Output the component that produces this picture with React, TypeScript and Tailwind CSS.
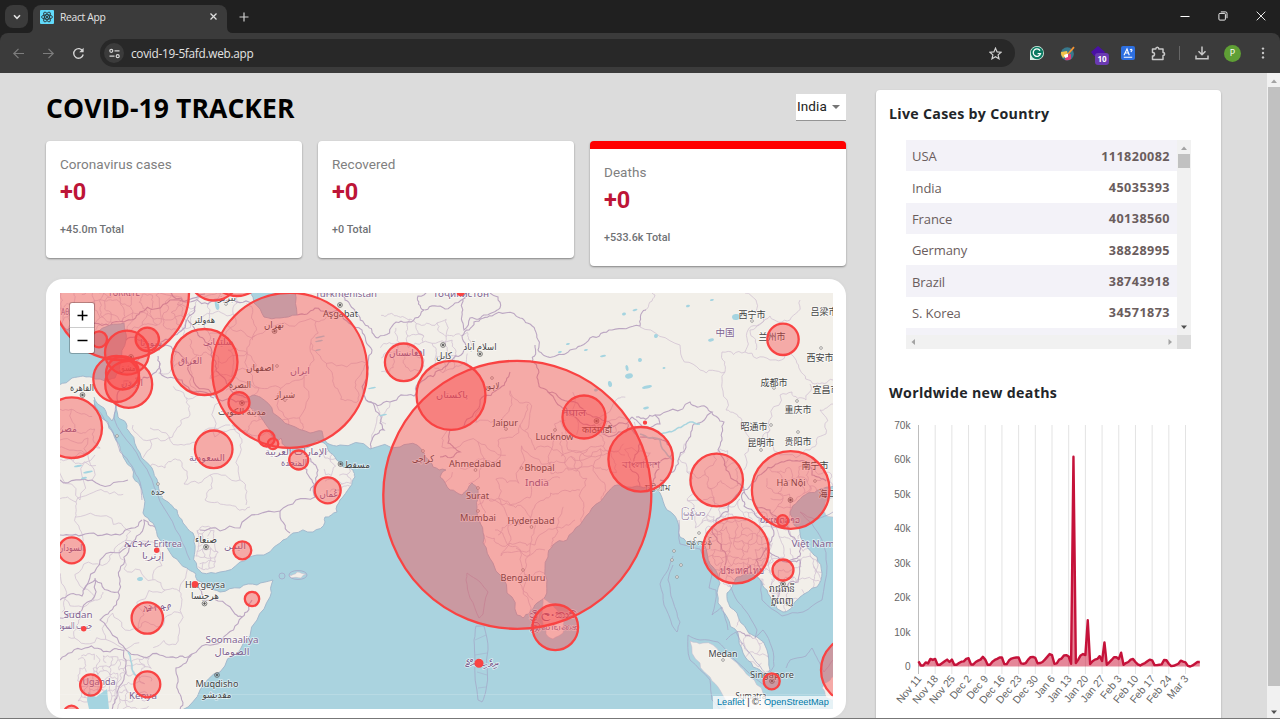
import React from "react";

type Pt = [number, number];

/* ---------- map geometry ---------- */

function parse(s: string): Pt[] {
  return s.trim().split(/\s+/).map((p) => p.split(",").map(Number) as Pt);
}

function makeRandom(seed: number) {
  let s = seed;
  return () => {
    s = (s * 16807) % 2147483647;
    return s / 2147483647;
  };
}

/* Midpoint displacement, so that borders and coasts look irregular. */
function rough(points: Pt[], amount: number, seed: number, levels = 3): string {
  const rnd = makeRandom(seed * 7919 + 13);
  let pts = points;
  for (let l = 0; l < levels; l++) {
    const next: Pt[] = [pts[0]];
    for (let i = 1; i < pts.length; i++) {
      const [ax, ay] = pts[i - 1];
      const [bx, by] = pts[i];
      const dx = bx - ax;
      const dy = by - ay;
      const len = Math.hypot(dx, dy);
      if (len > 3.5 && !(ax > 832 && bx > 832) && !(ay > 708 && by > 708)) {
        const k = (rnd() - 0.5) * amount;
        next.push([(ax + bx) / 2 - dy * k, (ay + by) / 2 + dx * k]);
      }
      next.push([bx, by]);
    }
    pts = next;
  }
  return pts.map((p, i) => (i ? "L" : "M") + p[0].toFixed(1) + " " + p[1].toFixed(1)).join("");
}

function mesh(x0: number, y0: number, x1: number, y1: number, cell: number, seed: number, keep = 0.7): string {
  const rnd = makeRandom(seed * 104729 + 7);
  const cols = Math.round((x1 - x0) / cell);
  const rows = Math.round((y1 - y0) / cell);
  const g: Pt[][] = [];
  for (let r = 0; r <= rows; r++) {
    g.push([]);
    for (let c = 0; c <= cols; c++) g[r].push([x0 + c * cell + (rnd() - 0.5) * cell * 0.8, y0 + r * cell + (rnd() - 0.5) * cell * 0.8]);
  }
  let d = "";
  for (let r = 0; r <= rows; r++)
    for (let c = 0; c <= cols; c++) {
      if (c < cols && rnd() < keep) d += rough([g[r][c], g[r][c + 1]], 0.5, seed + r * 31 + c);
      if (r < rows && rnd() < keep) d += rough([g[r][c], g[r + 1][c]], 0.5, seed + r * 17 + c * 3);
    }
  return d;
}

const OCEAN =
  "94,397 104,408 112,421 116,405 118,417 126,423 130,433 140,453 152,468 158,483 168,502 177,510 183,523 193,533 195,550 197,568 202,573 220,572 240,562 257,555 280,543 293,533 313,532 325,522 325,517 337,512 340,500 350,487 355,477 353,470 343,467 335,457 327,446 318,440 309,447 296,452 286,448 281,438 277,441 272,436 270,430 257,413 247,398 253,395 260,397 273,413 290,425 310,433 322,431 327,443 340,445 370,449 400,447 417,445 425,457 433,467 446,470 440,477 450,490 462,495 472,483 478,490 477,507 480,523 483,543 493,563 507,593 517,615 523,618 530,613 537,603 545,597 547,580 548,557 553,545 567,540 580,525 592,508 607,493 617,485 637,486 650,487 660,493 667,510 677,520 680,537 687,542 700,541 707,553 713,567 720,583 718,603 727,617 738,633 743,653 753,667 765,675 770,670 767,650 757,637 747,630 737,613 730,607 727,593 733,583 737,577 750,573 760,580 767,590 773,603 783,612 793,605 800,597 817,587 822,573 817,557 807,547 800,533 793,523 790,512 798,501 808,493 820,489 834,486 834,710 182,710 200,690 220,672 240,650 257,620 270,597 273,580 257,585 240,588 220,592 207,588 197,580 195,573 187,568 173,557 160,540 153,523 143,513 142,490 133,477 125,460 120,447 113,433 108,422 94,400";

const MEDITERRANEAN = "59,322 75,333 95,333 110,325 124,323 126,340 121,362 115,378 105,381 95,379 83,376 72,378 59,385 59,322";
const CASPIAN = "250,292 254,303 264,317 280,318 297,315 295,292 250,292";

const ISLANDS = [
  "690,641 703,643 720,653 737,663 750,677 763,693 772,712 727,712 720,690 710,677 700,663 690,641",
  "543,598 552,603 558,612 564,622 563,633 553,639 546,634 543,617 543,598",
  "834,497 826,501 823,509 827,516 834,517 834,497",
  "834,676 829,681 822,688 826,697 834,700 834,676",
  "289,575 297,572 306,574 301,578 291,578 289,575",
];

const NATIONS = [
  "60,348 60,335 80,330 110,326 124,322 140,312 170,300 205,294",
  "126,340 135,337 148,342 159,350 172,336 186,322 195,306",
  "122,362 135,363 150,353 166,345 190,374 215,396 236,402 250,400",
  "118,405 118,392 124,381 135,387 156,372 160,363",
  "158,356 160,373 182,380 190,390 214,398",
  "188,320 200,337 212,352 216,371 230,387 247,398",
  "60,480 92,480 128,480",
  "60,535 85,534 120,535 142,520",
  "200,530 240,528 280,511 315,497 312,480 298,462",
  "280,511 290,533",
  "310,491 318,470 310,458",
  "170,292 185,302 208,304 228,300 252,303",
  "297,315 315,308 340,312 362,330 372,350 368,374 366,400 380,415 384,430 372,440 371,449",
  "318,293 335,290 345,300 355,312 368,326 378,338 396,322 415,318 424,310 418,296 430,292",
  "366,400 390,402 414,396 424,380 440,370 452,360 466,346 462,336 474,322 492,316",
  "425,310 445,309 455,303 466,296 462,312 464,330 470,318 486,315 500,308 498,297 490,293",
  "492,316 520,318 535,330 538,350 552,357 570,350 590,338 612,330 640,326 646,310",
  "535,345 532,362 538,380 548,392 552,392 580,407 602,420 626,424 632,417",
  "548,392 556,402 575,417 600,430 626,432 628,424",
  "510,372 500,388 480,400 470,418 450,430 448,443 460,452 440,457",
  "632,417 640,424 660,424 655,415 636,417",
  "632,430 640,440 638,452 630,466 640,486",
  "640,437 660,439 672,452 660,462 655,474 652,487",
  "655,415 690,402 706,407 712,412 694,424 688,440 679,458 668,478 660,480",
  "712,412 724,422 722,440 718,450 726,470 734,480 744,490",
  "744,490 754,482 764,472 774,466 790,460 806,462 812,475 826,481",
  "744,490 734,498 728,512 716,520 712,532 722,550 724,570 718,580",
  "744,490 752,500 758,508 770,510 780,522 796,540 800,556 786,562",
  "744,492 744,506 756,516 770,522 774,534 768,548",
  "758,574 756,560 766,548 786,562 800,560 798,582 782,590 776,602",
  "720,625 734,631 750,636",
  "60,600 82,596 95,580 118,592 120,570 130,545 144,520 158,530 178,548 195,572",
  "118,592 108,614 100,620 126,650 150,656 176,658 192,654",
  "192,654 176,668 178,690 180,710",
  "195,585 205,600 235,614 242,617 252,600",
  "192,654 222,640 242,617",
  "60,660 85,648 110,652 124,650 126,660 118,690 112,710",
  "60,618 82,610 95,578",
  "130,545 100,560 84,590",
];

const STATES = [
  "60,440 88,438 92,480",
  "60,462 80,500 95,455",
  "104,293 100,310 112,322",
  "133,425 150,440 140,470 165,468 180,460",
  "150,440 176,430 190,415 186,398",
  "180,460 184,484 210,475 240,480 240,445 232,425",
  "210,475 205,500 230,505 250,507",
  "240,480 246,505",
  "150,428 178,445 200,438 230,425",
  "232,425 256,440 270,450",
  "376,404 372,440",
  "390,402 380,420 386,424",
  "645,310 655,295 652,293",
  "640,327 680,345 700,370 725,372 722,352 745,352",
  "745,352 748,330 764,320 756,300 745,293",
  "725,372 726,410 742,420 752,440 744,470",
  "745,352 770,360 790,352 800,370 815,384 833,380",
  "756,350 750,330 770,316 790,320 800,300",
  "752,440 770,430 780,395 792,392 806,400 810,384",
  "770,430 780,455 810,450 826,434 820,410 833,404",
  "460,468 478,459 496,462 498,440 520,425 528,404",
  "478,505 495,500 510,505 530,498 540,480 560,478",
  "498,535 510,525 530,520 544,500 560,492 580,490",
  "486,536 500,545 520,542 535,545 556,528 575,520",
  "495,530 508,545 524,555 545,550",
  "516,548 520,580 533,600",
  "560,420 568,450 590,456 610,450 625,455",
  "520,425 535,450 560,452 568,470 600,468",
];

const LAKES: [number, number, number, number][] = [
  [140, 579, 3, 2], [217, 305, 2, 5], [736, 317, 4, 3], [711, 340, 3, 1.5],
  [629, 376, 4, 2.5], [647, 387, 5, 1.5], [610, 384, 2, 3], [640, 360, 2, 2], [656, 336, 2, 2],
  [635, 310, 2.5, 1], [624, 314, 2, 1.5], [712, 300, 2, 1], [688, 306, 2, 1.2], [596, 390, 2, 1.5],
  [646, 408, 3, 1.2], [586, 350, 2, 1], [560, 352, 2, 1], [568, 344, 2, 1], [320, 337, 5, 0.8],
  [319, 341, 4, 0.8], [318, 350, 3, 0.8], [78, 466, 4, 1], [88, 472, 5, 1], [84, 478, 3, 1], [383, 415, 4, 0.8],
  [372, 388, 4, 0.8], [627, 368, 1.5, 3], [603, 356, 3, 1], [664, 368, 1.5, 1],
];

const SEA_BORDERS = [
  "94,404 108,424 116,438 120,452 132,466 140,482 142,500",
  "116,405 114,418 122,434 140,460 152,480 164,508 180,536 190,560",
  "467,573 480,582 488,592 483,614 479,618 470,598 466,580 467,573",
  "476,626 484,626 488,650 486,690 482,702 478,700 475,660 474,640 476,626",
  "673,556 668,570 660,584 664,605 672,625 677,632 680,622 676,610 671,596 668,580 673,565",
  "679,520 680,544 700,549 712,570 709,588 716,590 712,615 722,607 728,630",
  "730,585 738,602 745,610 757,630 755,638 763,630 772,648 774,666 770,672",
  "761,580 762,600 782,616 803,612 822,600 827,566 822,540 812,524 800,512 816,520 833,512",
  "688,635 690,660 710,680 712,700 722,712",
  "688,635 700,640 718,642 730,655 748,672 770,690",
  "726,640 736,632 756,662 770,676",
  "786,668 790,660 806,656 812,648 818,660 824,672 833,660",
];

const CIRCLES: [number, number, number][] = [
  [121, 292, 68], [214, 275.5, 25], [237, 268, 28], [289.8, 370.3, 77.5], [204.5, 362, 33], [127, 352.7, 22],
  [99, 339.3, 8], [147.3, 339.3, 11.7], [116.3, 379, 23], [128.7, 384.3, 23.5], [122.5, 373, 16.5], [71.7, 427.7, 30.3],
  [239, 402.7, 10.5], [266.7, 438.5, 8], [273, 443.7, 5.3], [298.7, 460, 9.5], [213.7, 449.3, 18.8], [403.7, 362.3, 18.8],
  [451, 395.3, 34.5], [327.7, 490.3, 13], [517.3, 494.8, 134], [584, 417, 21.5], [640.7, 459.3, 32.3], [716.7, 480, 26.3],
  [790.7, 490, 38.8], [783, 339.3, 15.7], [645, 422.7, 1], [735.7, 550.3, 33], [782.7, 520.7, 5.5], [783, 570, 10.5],
  [771.7, 681.3, 8], [855, 670, 34], [555.3, 627.3, 22.8], [479, 663.3, 3.4], [460.7, 292, 3], [71.7, 550.3, 13],
  [156.7, 550.3, 1.6], [195, 584.3, 2.2], [242.3, 550.3, 9], [252, 599, 7.2], [147.3, 618, 15.7], [83.7, 628.7, 1.6],
  [90.7, 685, 10.6], [147.3, 684.3, 13], [71.5, 713, 7.4],
];

/* text, centre x, baseline y, drawn width, kind (c = city, n = nation) */
const LABELS: [string, number, number, number, "c" | "n"][] = [
  ["TÜRKİYE", 124, 296, 32, "n"], ["Αθ", 65, 315, 8, "n"], ["تبریز", 227, 301, 18, "c"], ["هەولێر", 204, 323, 22, "c"],
  ["سلێمانی", 218, 345, 30, "n"], ["سوريا", 151, 346, 22, "n"], ["دمشق", 129, 371, 20, "c"], ["الأردن", 132, 386, 22, "n"],
  ["العراق", 190, 364, 24, "n"], ["القاهرة", 82, 391, 24, "c"], ["مصر", 68, 432, 18, "n"], ["تهران", 274, 328, 20, "c"],
  ["اصفهان", 260, 371, 28, "c"], ["ایران", 300, 374, 20, "n"], ["البصرة", 240, 388, 22, "c"], ["شیراز", 285, 398, 20, "c"],
  ["مدينة الكويت", 242, 415, 48, "c"], ["السعودية", 207, 461, 36, "n"], ["الإمارات العربية", 296, 455, 62, "n"],
  ["المتحدة", 294, 466, 26, "n"], ["جدة", 158, 495, 14, "c"], ["Türkmenistan", 346, 297, 62, "n"], ["Aşgabat", 340.5, 317, 35, "c"],
  ["Тоҷикистон", 461, 297, 56, "n"], ["افغانستان", 407, 356, 36, "n"], ["کابل", 444, 359, 16, "c"], ["اسلام آباد", 480, 350, 33, "c"],
  ["پاکستان", 452, 398, 32, "n"], ["لاہور", 492, 389, 15, "c"], ["Jaipur", 505.5, 426, 25, "c"], ["Lucknow", 554.5, 440, 38, "c"],
  ["नेपाल", 574, 416, 24, "n"], ["काठमाडौं", 597, 433, 30, "c"], ["كراچی", 423, 462, 22, "c"], ["Ahmedabad", 475, 467, 52, "c"],
  ["Bhopal", 539.5, 471, 30, "c"], ["India", 537, 486.3, 24, "n"], ["Surat", 477.5, 499, 23, "c"], ["Mumbai", 478, 520.7, 36, "c"],
  ["Hyderabad", 531, 524, 47, "c"], ["Bengaluru", 523, 580.5, 45, "c"], ["বাংলাদেশ", 641, 468, 39, "n"], ["চট্টগ্রাম", 658, 491, 26, "c"],
  ["مسقط", 357, 468, 26, "c"], ["عُمان", 329, 497, 19, "n"], ["西宁市", 752, 317.500, 27, "c"], ["中国", 725, 335.5, 19, "n"],
  ["兰州市", 772, 340, 27, "c"], ["吕梁市", 824, 315, 27, "c"], ["西安市", 820, 361, 27, "c"], ["成都市", 774, 386, 27, "c"],
  ["宜昌市", 826, 393, 27, "c"], ["重庆市", 798, 413, 27, "c"], ["昭通市", 754, 429.5, 27, "c"], ["昆明市", 761, 446, 27, "c"],
  ["贵阳市", 798, 445, 27, "c"], ["南宁市", 815, 469, 27, "c"], ["Hà Nội", 791, 485.500, 29, "c"], ["海口市", 832, 497, 27, "c"],
  ["မြန်မာ", 693, 516, 25, "n"], ["ရန်ကုန်", 699, 545, 26, "c"], ["ປະເທດລາວ", 780, 523, 40, "n"], ["Việt Nam", 813, 547, 43, "n"],
  ["ประเทศไทย", 742, 574, 44, "n"], ["រាជធានី", 782, 592, 26, "c"], ["ភ្នំពេញ", 782, 604, 23, "c"], ["Medan", 723, 657, 29, "c"],
  ["Singapore", 772, 677.5, 44, "c"], ["Sumatra", 751, 699, 31, "c"], ["ශ්‍රී ලංකාව", 553, 618, 48, "n"], ["இலங்கை", 554, 630, 48, "n"],
  ["ދިވެހިރާއްޖެ", 482, 667, 34, "n"], ["السودان", 71, 551, 27, "n"], ["ኤርትራ Eritrea", 153, 547, 58, "n"], ["إرتريا", 153, 559, 22, "n"],
  ["صنعاء", 206, 543, 22, "c"], ["اليمن", 235, 549, 22, "n"], ["Hargeysa", 205, 587.500, 40, "c"], ["هرجيسا", 205, 599, 28, "c"],
  ["ኢትዮጵያ", 157, 611, 29, "n"], ["Sudan", 78, 618, 29, "n"], ["جنوب السودان", 72, 629, 40, "n"], ["Soomaaliya", 232, 643, 53, "n"],
  ["الصومال", 232, 655, 35, "n"], ["Muqdisho", 217, 687, 43, "c"], ["مقديشو", 217, 698, 29, "c"], ["Uganda", 99, 685, 33, "n"], ["Kenya", 143, 699, 28, "n"],
];

const CAPITALS: Pt[] = [[274.5, 331], [82.5, 395], [340, 305], [443, 345], [480, 354], [596.5, 421], [340.5, 464], [206, 547], [204.5, 603.5], [217, 675], [783, 584], [790.5, 500], [242, 403], [772, 681], [131, 357]];
const TOWNS: Pt[] = [[277, 366], [285, 400], [226, 304], [158, 484], [492, 378], [506, 429], [555, 430], [423, 451], [475.5, 470], [521.5, 468], [478, 488], [478, 511], [531.5, 527], [523, 570], [752, 321], [821, 348], [774, 388], [797, 401], [771, 425], [798, 432], [761, 450], [815, 481], [723, 660], [658, 487], [699, 533], [674, 551], [672, 560], [681, 565], [677, 577], [117, 436]];

const MapView = React.memo(function MapView() {
  return (
    <svg className="block h-[416px] w-[773px]" viewBox="60 293 773 416" fill="none">
      <rect x="60" y="293" width="773" height="416" fill="#f2efe9" />
      <g stroke="#c9b5cd" strokeWidth="0.7" opacity="0.85">
        <path d={mesh(60, 293, 190, 325, 12, 3, 0.8)} />
        <path d={mesh(385, 320, 470, 372, 12, 5, 0.7)} />
        <path d={mesh(225, 325, 360, 440, 28, 8, 0.7)} />
        <path d={mesh(450, 400, 630, 600, 26, 12, 0.5)} />
        <path d={mesh(708, 515, 768, 585, 7, 14, 0.75)} />
        <path d={mesh(770, 470, 825, 610, 10, 15, 0.7)} />
        <path d={mesh(690, 450, 750, 515, 18, 16, 0.7)} />
        <path d={mesh(198, 526, 218, 566, 6, 17, 0.8)} />
        <path d={mesh(80, 655, 118, 705, 6, 18, 0.8)} />
        <path d={mesh(118, 660, 150, 708, 8, 19, 0.7)} />
        <path d={mesh(60, 500, 180, 650, 24, 20, 0.55)} />
        <path d={mesh(160, 300, 245, 395, 18, 21, 0.5)} />
        <path d={mesh(325, 450, 350, 490, 8, 22, 0.6)} />
        <path d={mesh(550, 420, 640, 460, 16, 23, 0.6)} />
        <path d={mesh(738, 610, 770, 672, 9, 24, 0.6)} />
        <path d={mesh(60, 410, 100, 455, 18, 25, 0.6)} />
        {STATES.map((s, i) => (
          <path key={i} d={rough(parse(s), 0.45, i + 60)} />
        ))}
      </g>
      <g stroke="#bba6c2" strokeWidth="1.1">
        {NATIONS.map((s, i) => (
          <path key={i} d={rough(parse(s), 0.4, i + 2)} />
        ))}
      </g>
      <path d={rough(parse("660,434 675,430 690,422 700,424"), 0.3, 9) + rough(parse("672,460 660,440 640,434"), 0.3, 4) + rough(parse("128,652 132,668 136,676"), 0.2, 5)} stroke="#a9d5df" strokeWidth="1.5" />
      <g fill="#a5d4e0">
        <path d="M88 692L96 697L107 689L109 709H89L87 700Z" />
        {LAKES.map(([x, y, a, b], i) => (
          <ellipse key={i} cx={x} cy={y} rx={a} ry={b} transform={"rotate(-12 " + x + " " + y + ")"} />
        ))}
      </g>
      <g fill="#aad3df" stroke="#9fb4cb" strokeWidth="0.9" strokeLinejoin="round">
        <path d={rough(parse(OCEAN), 0.3, 31, 2)} />
        <path d={rough(parse(MEDITERRANEAN), 0.2, 32, 2)} />
        <path d={rough(parse(CASPIAN), 0.2, 33, 2)} />
      </g>
      <g fill="#f2efe9" stroke="#c3b6cc" strokeWidth="0.5">
        {ISLANDS.map((s, i) => (
          <path key={i} d={rough(parse(s), 0.35, i + 90, 2)} />
        ))}
      </g>
      <g stroke="#a39fc4" strokeWidth="0.8" opacity="0.8">
        {SEA_BORDERS.map((s, i) => (
          <path key={i} d={rough(parse(s), 0.12, i + 200, 2)} />
        ))}
        <path d="M475 640l11 -5M475 655l12 -2M477 672l10 3M478 688l8 -1" opacity="0.6" />
        <ellipse cx="282" cy="576" rx="3" ry="3" />
        <ellipse cx="298" cy="575" rx="9" ry="4.5" />
      </g>
      <path d="M60 694.500H833" stroke="#fff" strokeWidth="0.5" opacity="0.35" />
      <g stroke="#555" strokeWidth="0.7">
        {CAPITALS.map(([x, y], i) => (
          <g key={i}>
            <circle cx={x} cy={y} r="2.4" />
            <circle cx={x} cy={y} r="0.9" fill="#555" />
          </g>
        ))}
        {TOWNS.map(([x, y], i) => (
          <circle key={i} cx={x} cy={y} r="1.4" strokeWidth="0.6" stroke="#777" fill="#f4f1ee" />
        ))}
      </g>
      <g className="font-['Noto_Sans','DejaVu_Sans','Noto_Sans_CJK_SC',sans-serif] text-[9.5px]" textAnchor="middle">
        {LABELS.map(([t, x, y, w, k], i) => (
          <text
            key={i}
            x={x}
            y={y}
            textLength={w}
            lengthAdjust="spacingAndGlyphs"
            fill={k === "c" ? "#444444" : "#80628f"}
            stroke="#ffffff"
            strokeOpacity="0.6"
            strokeWidth="1.5"
            paintOrder="stroke"
          >
            {t}
          </text>
        ))}
      </g>
      <g stroke="#f94343" strokeWidth="2.3" fill="#fb4443" fillOpacity="0.4">
        {CIRCLES.map(([x, y, r], i) => (
          <circle key={i} cx={x} cy={y} r={r} fillOpacity={r < 4 ? 1 : 0.4} />
        ))}
      </g>
    </svg>
  );
});

/* ---------- chart ---------- */

const DEATHS = [
  1.5, 0.3, 0.3, 1.2, 0.9, 2.2, 1.9, 2.2, 0.5, 0.5, 1, 1.5, 2, 1.3, 2, 0.5, 0.5, 1, 1.4, 1.5, 2.2, 2.4, 0.6, 0.6, 1.3, 1.7, 2, 2.8,
  2, 0.5, 0.5, 1.4, 1.9, 2.2, 2.6, 2.6, 0.7, 0.7, 1.8, 2.3, 2.5, 2.6, 2.6, 0.9, 0.8, 1, 2, 2.7, 2.8, 2.5, 0.9, 1, 1.3, 2, 2.8, 3.6,
  3.3, 0.8, 0.9, 2, 2.3, 3.2, 3.3, 2.9, 0.8, 60.8, 1, 2, 3.2, 3.6, 3.3, 13.4, 0.7, 1.5, 2, 2.2, 3, 1.6, 7, 0.5, 1.2, 1.9, 2.7, 2.7,
  2.2, 4, 0.5, 1, 1.3, 2, 2.2, 1.3, 0.6, 0.3, 0.7, 1, 1.5, 2, 1.8, 0.4, 0.4, 0.5, 0.6, 1.9, 1.8, 0.8, 0.1, 0.2, 0.5, 0.8, 1.7, 1.4,
  1.2, 0.2, 0, 0.3, 0.8, 1.3, 1.3,
];
const TICKS = ["Nov 11", "Nov 18", "Nov 25", "Dec 2", "Dec 9", "Dec 16", "Dec 23", "Dec 30", "Jan 6", "Jan 13", "Jan 20", "Jan 27", "Feb 3", "Feb 10", "Feb 17", "Feb 24", "Mar 3"];

function DeathsChart() {
  const px = (i: number) => 28.5 + i * 2.384;
  const py = (v: number) => 251.5 - v * 3.45;
  const line = DEATHS.map((v, i) => (i ? "L" : "M") + px(i).toFixed(2) + " " + py(v).toFixed(2)).join("");
  return (
    <svg className="block h-[300px] w-[320px] font-['Liberation_Sans',sans-serif]" viewBox="0 0 320 300">
      {TICKS.map((t, i) => (
        <g key={t}>
          <line x1={px(i * 7)} x2={px(i * 7)} y1="10" y2="259" stroke={i ? "#e3e3e3" : "#bdbdbd"} strokeWidth="1" />
          <text transform={"translate(" + (px(i * 7) + 0.5) + " 261.5) rotate(-50)"} textAnchor="end" dy="4" fontSize="10.5" fill="#666">
            {t}
          </text>
        </g>
      ))}
      {[0, 10, 20, 30, 40, 50, 60, 70].map((v) => (
        <text key={v} x="20.500" y={py(v) + 3.5} textAnchor="end" fontSize="10.1" fill="#666">
          {v ? v + "k" : "0"}
        </text>
      ))}
      <path d={line + "L" + px(DEATHS.length - 1) + " 251.5L28.5 251.5Z"} fill="rgb(204,16,52)" fillOpacity="0.5" />
      <path d={line} fill="none" stroke="#c5123a" strokeWidth="2.4" strokeLinejoin="round" />
    </svg>
  );
}

/* ---------- dashboard ---------- */

function InfoBox({ title, total, active }: { title: string; total: string; active?: boolean }) {
  return (
    <div className={"w-64 overflow-hidden rounded bg-white shadow-[0_1px_2px_rgba(0,0,0,0.4)] " + (active ? "border-t-8 border-[red]" : "")}>
      <div className="h-[117px] px-[14px] pt-[13px] font-['Roboto',sans-serif]">
        <div className="text-[13.5px] leading-5 tracking-[0.05px] text-[#808080]">{title}</div>
        <div className="mt-[4px] text-[23.5px] leading-7 font-bold text-[#bd1537]">+0</div>
        <div className="mt-[14px] text-[10.8px] leading-5 font-medium tracking-[0.05px] text-[#6f7275]">{total}</div>
      </div>
    </div>
  );
}

const ROWS = [
  ["USA", "111820082"],
  ["India", "45035393"],
  ["France", "40138560"],
  ["Germany", "38828995"],
  ["Brazil", "38743918"],
  ["S. Korea", "34571873"],
];

function Arrow({ dir, color }: { dir: "up" | "down" | "left" | "right"; color: string }) {
  const d = { up: "M1 6L4 2.500L7 6Z", down: "M1 2.500L4 6L7 2.500Z", left: "M6 1L2.500 4L6 7Z", right: "M2.500 1L6 4L2.500 7Z" }[dir];
  return (
    <svg className="size-2" viewBox="0 0 8 8" fill={color}>
      <path d={d} />
    </svg>
  );
}

function CountryTable() {
  return (
    <div className="mt-[14px] ml-4 flex h-[209px] w-[285px] flex-col overflow-hidden font-['Open_Sans',sans-serif]">
      <div className="flex h-[195px]">
        <div className="w-[271px] overflow-hidden">
          {ROWS.map(([name, n], i) => (
            <div key={name} className={"flex h-[31.35px] items-center justify-between pt-[3px] pr-[7px] pl-[6px] text-[13px] text-[#6a5d5d] " + (i % 2 ? "bg-white" : "bg-[#f3f2f8]")}>
              <span className="tracking-[-0.1px]">{name}</span>
              <strong className="text-[12.6px] tracking-[0.45px]">{n}</strong>
            </div>
          ))}
          <div className="h-2 bg-[#f3f2f8]" />
        </div>
        <div className="flex w-[14px] flex-col items-center bg-[#f1f1f1] py-1">
          <Arrow dir="up" color="#a3a3a3" />
          <div className="mt-[2px] h-[14px] w-3 bg-[#c1c1c1]" />
          <div className="grow" />
          <Arrow dir="down" color="#505050" />
        </div>
      </div>
      <div className="flex h-[14px]">
        <div className="flex w-[271px] items-center justify-between bg-[#f1f1f1] px-[3px]">
          <Arrow dir="left" color="#a3a3a3" />
          <Arrow dir="right" color="#a3a3a3" />
        </div>
        <div className="w-[14px] bg-[#dcdcdc]" />
      </div>
    </div>
  );
}

function ReactLogo() {
  return (
    <svg className="size-[14px]" viewBox="0 0 14 14" fill="none">
      <rect width="14" height="14" rx="1" fill="#61dafb" />
      <g stroke="#222" strokeWidth="0.8">
        <ellipse cx="7" cy="7" rx="5.500" ry="2.200" />
        <ellipse cx="7" cy="7" rx="5.500" ry="2.200" transform="rotate(60 7 7)" />
        <ellipse cx="7" cy="7" rx="5.500" ry="2.200" transform="rotate(120 7 7)" />
      </g>
      <circle cx="7" cy="7" r="1.100" fill="#222" />
    </svg>
  );
}

function BrowserChrome() {
  return (
    <header className="h-[73px] bg-[#202020] font-['Open_Sans',sans-serif]">
      <div className="flex h-[33px] items-start pl-[5px]">
        <div className="mt-[5px] flex size-[23px] items-center justify-center rounded-lg bg-[#3b3b3b]">
          <svg className="size-[10px]" viewBox="0 0 10 10" fill="none" stroke="#e3e3e3" strokeWidth="1.600">
            <path d="M2 3.300L5 6.300L8 3.300" />
          </svg>
        </div>
        <div className="mt-[5px] ml-[-1px] flex h-7 items-end">
          <svg className="size-[6px]" viewBox="0 0 6 6" fill="#3b3b3b">
            <path d="M6 0V6H0Q6 6 6 0Z" />
          </svg>
          <div className="flex h-7 w-[194px] items-center rounded-t-lg bg-[#3b3b3b] pr-[9px] pl-[7px]">
            <span className="-mt-[5px]"><ReactLogo /></span>
            <span className="-mt-[3px] ml-[6px] grow text-[10.3px] tracking-[-0.3px] text-[#e3e3e3]">React App</span>
            <svg className="-mt-[5px] size-[9px]" viewBox="0 0 9 9" fill="none" stroke="#dedede" strokeWidth="1.300">
              <path d="M1.500 1.500L7.500 7.500M7.500 1.500L1.500 7.500" />
            </svg>
          </div>
          <svg className="size-[6px]" viewBox="0 0 6 6" fill="#3b3b3b">
            <path d="M0 0V6H6Q0 6 0 0Z" />
          </svg>
        </div>
        <svg className="mt-[12px] ml-[6px] size-[10px]" viewBox="0 0 10 10" fill="none" stroke="#d0d0d0" strokeWidth="1.200">
          <path d="M5 0.500V9.500M0.500 5H9.500" />
        </svg>
        <div className="mt-[11px] ml-auto flex items-center gap-[28px] pr-[14px]">
          <svg className="size-[10px]" viewBox="0 0 10 10" stroke="#fff"><path d="M0.500 5.500H9.500" /></svg>
          <svg className="size-[10px]" viewBox="0 0 10 10" fill="none" stroke="#fff" strokeWidth="0.900">
            <rect x="0.900" y="2.400" width="6.500" height="6.700" rx="1" />
            <path d="M2.800 0.900H7.500Q9 0.900 9 2.400V7.200" />
          </svg>
          <svg className="size-[10px]" viewBox="0 0 10 10" stroke="#fff" strokeWidth="0.900"><path d="M0.700 0.700L9.300 9.300M9.300 0.700L0.700 9.300" /></svg>
        </div>
      </div>
      <div className="flex h-10 items-center rounded-t-lg bg-[#3b3b3b] pl-[12px]">
        <svg className="size-[13px]" viewBox="0 0 13 13" fill="none" stroke="#7d7d7d" strokeWidth="1.200"><path d="M12 6.500H2M6.500 1.800L1.800 6.500L6.500 11.200" /></svg>
        <svg className="ml-[17px] size-[13px]" viewBox="0 0 13 13" fill="none" stroke="#7d7d7d" strokeWidth="1.200"><path d="M1 6.500H11M6.500 1.800L11.200 6.500L6.500 11.200" /></svg>
        <svg className="ml-[17px] size-[13px]" viewBox="0 0 13 13" fill="none" stroke="#d4d4d4" strokeWidth="1.400">
          <path d="M10.800 4.200A4.800 4.800 0 1 0 11.200 7.500" />
          <path d="M11.600 0.800V5.200H7.200Z" fill="#d4d4d4" stroke="none" />
        </svg>
        <div className="ml-[15px] flex h-7 w-[915px] items-center rounded-full bg-[#282828] pr-[13px] pl-[4px]">
          <div className="flex size-5 items-center justify-center rounded-full bg-[#3b3b3b]">
            <svg className="size-[11px]" viewBox="0 0 11 11" fill="none" stroke="#d8d8d8" strokeWidth="1.200">
              <circle cx="2.300" cy="2.800" r="1.500" /><path d="M5.500 2.800H10.500M0.500 8.200H5.500" /><circle cx="8.700" cy="8.200" r="1.500" />
            </svg>
          </div>
          <span className="ml-[7px] grow pt-px text-[11.8px] tracking-[-0.28px] text-[#e3e3e3]">covid-19-5fafd.web.app</span>
          <svg className="size-[13px]" viewBox="0 0 13 13" fill="none" stroke="#d0d0d0" strokeWidth="1.200">
            <path d="M6.500 1.200L8.100 4.900L12.100 5.200L9.100 7.900L10 11.800L6.500 9.700L3 11.800L3.900 7.900L0.900 5.200L4.900 4.900Z" />
          </svg>
        </div>
        <svg className="ml-[15px] size-[14px]" viewBox="0 0 14 14" fill="none">
          <path d="M0 14V6.500A7 7 0 1 1 7 14Z" fill="#d5efe5" />
          <circle cx="7" cy="7" r="6.200" fill="#0c7a62" />
          <path d="M10 4.600A3.700 3.700 0 1 0 10.500 7.600H7.600" stroke="#fff" strokeWidth="1.300" />
        </svg>
        <svg className="ml-[16px] size-[15px]" viewBox="0 0 15 15">
          <circle cx="7.300" cy="7.800" r="6.600" fill="#38788c" />
          <path d="M1 6L7 5L8 9L3 12Q0.500 9.500 1 6Z" fill="#f2c34a" />
          <path d="M6 9L11 8L11 13Q8 15 5 14Z" fill="#dd3b78" />
          <path d="M4 9L8 7.500L8 11L5 12Z" fill="#fff" />
          <path d="M8 8L14 1.200" stroke="#f29434" strokeWidth="1.800" />
        </svg>
        <div className="relative ml-[15px] size-[16px]">
          <svg className="size-[16px]" viewBox="0 0 16 16"><path d="M1 7L8 1L15 7L12 11H4Z" fill="#4911a5" /></svg>
          <span className="absolute top-[8px] left-[5px] flex h-3 w-[14px] items-center justify-center rounded-[3px] bg-[#6a3ab2] text-[8px] font-bold text-white">10</span>
        </div>
        <svg className="ml-[15px] size-[14px]" viewBox="0 0 14 14" fill="none">
          <rect width="14" height="14" rx="2" fill="#2d6fe0" />
          <path d="M3 9.300L6 3L8.300 9.300M4.200 7H7.500M2.800 11.300H11.200M9 4Q10.700 2.500 11 4.200Q10.500 5.200 9.800 6" stroke="#fff" strokeWidth="1.100" />
        </svg>
        <svg className="ml-[16px] size-[15px]" viewBox="0 0 15 15" fill="none" stroke="#c8c8c8" strokeWidth="1.500" strokeLinejoin="round">
          <path d="M1.500 3H4.800Q4.800 1.200 6.300 1.200T7.800 3H12V6.600Q13.600 6.600 13.600 8.100T12 9.600V13.500H1.500V10Q3.500 10 3.500 8.200T1.500 6.500Z" />
        </svg>
        <div className="ml-[13px] h-[14px] w-px bg-[#666]" />
        <svg className="ml-[15px] size-[14px]" viewBox="0 0 14 14" fill="none" stroke="#c8c8c8" strokeWidth="1.500">
          <path d="M7 0.500V8.500M3.500 5.300L7 8.800L10.500 5.300M1 9.500V12.800H13V9.500" />
        </svg>
        <div className="ml-[15px] flex size-[17px] items-center justify-center rounded-full bg-[#5f9f35] text-[9px] text-white">P</div>
        <svg className="ml-[20px] h-3 w-1" viewBox="0 0 4 12" fill="#c8c8c8">
          <circle cx="2" cy="1.600" r="1.200" /><circle cx="2" cy="6" r="1.200" /><circle cx="2" cy="10.400" r="1.200" />
        </svg>
      </div>
    </header>
  );
}

export default function App() {
  return (
    <div className="flex h-[719px] w-[1280px] flex-col overflow-hidden bg-[#dcdcdc]">
      <BrowserChrome />
      <div className="flex h-[645px] overflow-hidden">
        <main className="flex grow pl-[46px]">
          <section className="w-[800px] shrink-0 pt-[19px]">
            <div className="flex h-[49px] items-start justify-between">
              <h1 className="font-['Open_Sans',sans-serif] text-[26.500px] leading-[32px] font-bold tracking-[0.08px] text-black">COVID-19 TRACKER</h1>
              <div className="mt-[2px] flex h-[27px] w-[50px] items-center border-b border-[#949494] bg-white pl-[1px] font-['Roboto',sans-serif] text-[13.5px] tracking-[0.1px] text-[#222]">
                <span className="-mt-[2px] grow">India</span>
                <svg className="mr-[6px] h-1 w-2" viewBox="0 0 8 4" fill="#757575"><path d="M0 0H8L4 4Z" /></svg>
              </div>
            </div>
            <div className="flex items-start justify-between">
              <InfoBox title="Coronavirus cases" total="+45.0m Total" />
              <InfoBox title="Recovered" total="+0 Total" />
              <InfoBox title="Deaths" total="+533.6k Total" active />
            </div>
            <div className="mt-[13px] h-[439px] rounded-[17px] bg-white pt-[14px] pl-[14px] shadow-[0_0_4px_rgba(0,0,0,0.04)]">
              <div className="relative h-[416px] w-[773px] overflow-hidden">
                <MapView />
                <div className="absolute top-[10px] left-[10px] flex w-[24px] flex-col rounded-[2px] bg-white shadow-[0_0_0_1px_rgba(0,0,0,0.25)]">
                  <div className="flex h-[25px] items-center justify-center border-b border-[#ccc]">
                    <svg className="size-[11px]" viewBox="0 0 11 11" stroke="#000" strokeWidth="1.500"><path d="M5.500 0.500V10.500M0.500 5.500H10.500" /></svg>
                  </div>
                  <div className="flex h-[25px] items-center justify-center">
                    <svg className="size-[11px]" viewBox="0 0 11 11" stroke="#000" strokeWidth="1.500"><path d="M0.500 5.500H10.500" /></svg>
                  </div>
                </div>
                <div className="absolute right-0 bottom-0 h-[13px] w-[120px] bg-white/70 pl-[4px] font-['Liberation_Sans',sans-serif] text-[9.2px] leading-[13px] whitespace-nowrap text-[#333]">
                  <span className="text-[#0078a8]">Leaflet</span> | ©: <span className="text-[#0078a8]">OpenStreetMap</span>
                </div>
              </div>
            </div>
          </section>
          <aside className="mt-[17px] ml-[30px] h-[640px] w-[345px] shrink-0 rounded bg-white px-[14px] pt-[12px] shadow-[0_1px_2px_rgba(0,0,0,0.3)]">
            <h3 className="-ml-px font-['Open_Sans',sans-serif] text-[14.2px] leading-6 font-bold tracking-[0.3px] text-[#222529]">Live Cases by Country</h3>
            <CountryTable />
            <h3 className="mt-[32px] -ml-px font-['Open_Sans',sans-serif] text-[14.2px] leading-6 font-bold tracking-[0.32px] text-[#222529]">Worldwide new deaths</h3>
            <div className="mt-[10px]">
              <DeathsChart />
            </div>
          </aside>
        </main>
        <div className="flex w-[13px] flex-col items-center bg-[#f1f1f1] pt-[4px] pb-[2px]">
          <Arrow dir="up" color="#a3a3a3" />
          <div className="mt-[2px] h-[599px] w-3 bg-[#c1c1c1]" />
          <div className="grow" />
          <Arrow dir="down" color="#505050" />
        </div>
      </div>
      <div className="h-px bg-[#777]" />
    </div>
  );
}
